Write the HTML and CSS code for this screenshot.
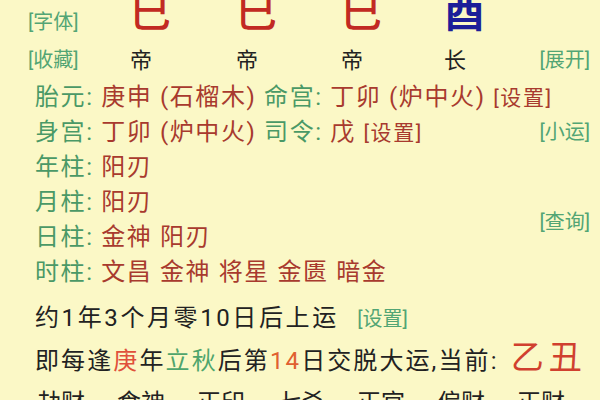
FILE: index.html
```html
<!DOCTYPE html>
<html lang="zh">
<head>
  <meta charset="UTF-8" />
  <title>八字排盘</title>
  <link rel="stylesheet" href="styles.css">
</head>
<body>
  <div class="app">

    <!-- 四柱 -->
    <div class="pillars">
      <span class="link">[字体]</span>
      <span class="gz red">巳</span>
      <span class="gz red">巳</span>
      <span class="gz red">巳</span>
      <span class="gz blue">酉</span>
      <span></span>

      <span class="link">[收藏]</span>
      <span class="star">帝</span>
      <span class="star">帝</span>
      <span class="star">帝</span>
      <span class="star">长</span>
      <span class="link right">[展开]</span>
    </div>

    <!-- 神煞 -->
    <div class="info">
      <div class="lines">
        <div class="line"><span class="key">胎元:</span> <span class="val">庚申 (石榴木)</span> <span class="key">命宫:</span> <span class="val">丁卯 (炉中火)</span> <span class="val set">[设置]</span></div>
        <div class="line"><span class="key">身宫:</span> <span class="val">丁卯 (炉中火)</span> <span class="key">司令:</span> <span class="val">戊</span> <span class="val set">[设置]</span></div>
        <div class="line"><span class="key">年柱:</span> <span class="val">阳刃</span></div>
        <div class="line"><span class="key">月柱:</span> <span class="val">阳刃</span></div>
        <div class="line"><span class="key">日柱:</span> <span class="val">金神 阳刃</span></div>
        <div class="line"><span class="key">时柱:</span> <span class="val">文昌 金神 将星 金匮 暗金</span></div>
      </div>
      <div class="side">
        <span class="link small-yun">[小运]</span>
        <span class="link query">[查询]</span>
      </div>
    </div>

    <!-- 大运 -->
    <div class="yun">
      <div class="yun-line start">约1年3个月零10日后上运 <span class="link">[设置]</span></div>
      <div class="yun-line">即每逢<span class="hot">庚</span>年<span class="green">立秋</span>后第<span class="num">14</span>日交脱大运,当前: <span class="now">乙丑</span></div>
    </div>

    <div class="gods">
      <span>劫财</span>
      <span>食神</span>
      <span>正印</span>
      <span>七杀</span>
      <span>正官</span>
      <span>偏财</span>
      <span>正财</span>
    </div>

  </div>
</body>
</html>
```

FILE: styles.css
```css
body {
  margin: 0;
  background: #fbf8c6;
  font-family: Roboto, "Noto Sans CJK SC", sans-serif;
  color: #222;
  overflow: hidden;
}

.app {
  width: 600px;
  height: 400px;
  overflow: hidden;
}

.link {
  color: #52a574;
  font-size: 20px;
  white-space: nowrap;
}

/* 四柱 */
.pillars {
  display: grid;
  grid-template-columns: 130px 106px 105px 103px 88px 1fr;
  grid-template-rows: 40px 36px;
  align-items: center;
}

.pillars .link {
  padding-left: 28px;
}

.pillars .link.right {
  padding-left: 0;
  text-align: right;
  padding-right: 10px;
}

.gz {
  font-size: 41px;
  line-height: 26px;
  align-self: start;
  font-weight: 500;
}

.red {
  color: #c22a22;
}

.blue {
  color: #1c1e98;
  font-weight: 700;
}

.star {
  font-size: 22px;
}

/* 神煞 */
.info {
  display: flex;
  padding-top: 4px;
}

.lines {
  flex: 1;
  min-width: 0;
  padding-left: 35px;
}

.line {
  height: 35px;
  line-height: 35px;
  font-size: 24px;
  letter-spacing: 1.6px;
  white-space: nowrap;
}

.key {
  color: #4a9966;
}

.val {
  color: #a83a2e;
}

.set {
  font-size: 21px;
}

.side {
  flex-shrink: 0;
  display: flex;
  flex-direction: column;
  align-items: flex-end;
  padding-right: 10px;
}

.side .link {
  line-height: 35px;
}

.small-yun {
  margin-top: 35px;
}

.query {
  margin-top: 55px;
}

/* 大运 */
.yun {
  padding-left: 35px;
  margin-top: 8px;
}

.yun-line {
  height: 40px;
  line-height: 40px;
  font-size: 24px;
  letter-spacing: 2.1px;
  white-space: nowrap;
}

.yun-line.start {
  letter-spacing: 2.6px;
}

.yun-line .link {
  font-size: 20px;
  letter-spacing: 0;
  margin-left: 10px;
}

.hot {
  color: #e0503a;
}

.green {
  color: #4fa56c;
}

.num {
  color: #e06030;
}

.now {
  color: #d0402e;
  font-size: 33px;
  letter-spacing: 5px;
  margin-left: 4px;
}

.gods {
  display: grid;
  grid-template-columns: repeat(7, 80px);
  margin-top: 5px;
  padding-left: 37px;
  line-height: 40px;
  font-size: 24px;
}
```
